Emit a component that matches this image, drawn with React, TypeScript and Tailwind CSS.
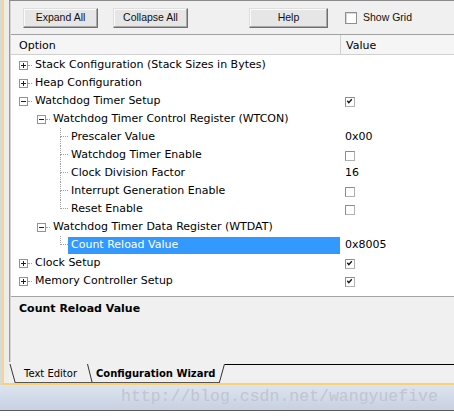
import React from 'react'

type Value = { kind: 'check'; checked: boolean } | { kind: 'text'; text: string }

type Row = {
  level: 0 | 1 | 2
  label: string
  expanded?: boolean
  last?: boolean
  selected?: boolean
  value?: Value
}

const ROWS: Row[] = [
  { level: 0, label: 'Stack Configuration (Stack Sizes in Bytes)' },
  { level: 0, label: 'Heap Configuration' },
  { level: 0, label: 'Watchdog Timer Setup', expanded: true, value: { kind: 'check', checked: true } },
  { level: 1, label: 'Watchdog Timer Control Register (WTCON)', expanded: true },
  { level: 2, label: 'Prescaler Value', value: { kind: 'text', text: '0x00' } },
  { level: 2, label: 'Watchdog Timer Enable', value: { kind: 'check', checked: false } },
  { level: 2, label: 'Clock Division Factor', value: { kind: 'text', text: '16' } },
  { level: 2, label: 'Interrupt Generation Enable', value: { kind: 'check', checked: false } },
  { level: 2, label: 'Reset Enable', last: true, value: { kind: 'check', checked: false } },
  { level: 1, label: 'Watchdog Timer Data Register (WTDAT)', expanded: true },
  { level: 2, label: 'Count Reload Value', last: true, selected: true, value: { kind: 'text', text: '0x8005' } },
  { level: 0, label: 'Clock Setup', value: { kind: 'check', checked: true } },
  { level: 0, label: 'Memory Controller Setup', value: { kind: 'check', checked: true } },
]

function ExpandBox({ expanded }: { expanded?: boolean }) {
  return (
    <svg width="9" height="9" viewBox="0 0 9 9" className="shrink-0">
      <rect x="0.5" y="0.5" width="8" height="8" fill="#fff" stroke="#939393" />
      <line x1="2" y1="4.5" x2="7" y2="4.5" stroke="#1b1b3a" />
      {!expanded && <line x1="4.5" y1="2" x2="4.5" y2="7" stroke="#1b1b3a" />}
    </svg>
  )
}

function SmallCheck({ checked }: { checked: boolean }) {
  return (
    <svg width="10" height="10" viewBox="0 0 10 10">
      <rect x="0.5" y="0.5" width="9" height="9" fill="#fff" stroke="#b0b0b0" />
      <path d="M0.5 9.5V0.5H9.5" fill="none" stroke="#8c8c8c" />
      {checked && <path d="M2.3 3.8L3.8 5.6L6.8 2.2" fill="none" stroke="#151515" strokeWidth="1.4" />}
    </svg>
  )
}

function TreeRow({ row }: { row: Row }) {
  return (
    <div className="flex h-[18px]">
      <div className="flex w-[330px] shrink-0 items-center">
        {row.level === 0 && (
          <div className="flex items-center pl-[8px]">
            <ExpandBox expanded={row.expanded} />
            <span className="w-[4px] border-t border-dotted border-[#a0a0a0]" />
          </div>
        )}
        {row.level === 1 && (
          <div className="flex items-center pl-[26px]">
            <ExpandBox expanded={row.expanded} />
            <span className="w-[4px] border-t border-dotted border-[#a0a0a0]" />
          </div>
        )}
        {row.level === 2 && (
          <div className="ml-[49px] flex h-full w-[8px] flex-col">
            <div className="h-[9px] border-b border-l border-dotted border-[#a0a0a0]" />
            {!row.last && <div className="flex-1 border-l border-dotted border-[#a0a0a0]" />}
          </div>
        )}
        <div
          className={
            row.selected
              ? 'mr-[1px] flex h-[17px] flex-1 items-center bg-[#3399ff] px-[3px] pt-[1px] text-white'
              : 'flex h-[17px] flex-1 items-center px-[3px] pt-[1px] text-black'
          }
        >
          <span className="whitespace-nowrap">{row.label}</span>
        </div>
      </div>
      <div className="flex flex-1 items-center pl-[4px] pt-[1px]">
        {row.value?.kind === 'text' && <span className="text-black">{row.value.text}</span>}
        {row.value?.kind === 'check' && <SmallCheck checked={row.value.checked} />}
      </div>
    </div>
  )
}

function Button({ label, width }: { label: string; width: string }) {
  return (
    <div
      className={`${width} flex h-[20px] items-center justify-center border border-t-[#dedede] border-l-[#dedede] border-r-[#6f6f6f] border-b-[#6f6f6f] bg-[#e6e6e6] text-[10.5px] text-[#111] shadow-[inset_-1px_-1px_0_#a8a8a8,inset_1px_1px_0_#fafafa]`}
    >
      {label}
    </div>
  )
}

export default function App() {
  return (
    <div className="flex h-[419px] w-[454px] flex-col overflow-hidden bg-white font-[family-name:'DejaVu_Sans',Verdana,sans-serif] text-[11px]">
      <div className="flex h-[383px]">
        <div className="w-[2px] bg-[#d2d9e8]" />
        <div className="w-[2px] bg-[#f4d77e]" />
        <div className="w-[5px] bg-[#ededed]" />

        <div className="flex flex-1 flex-col">
          {/* panel */}
          <div className="flex h-[362px] flex-col border-l border-t border-l-[#9a9a9a] border-t-[#8a8a8a]">
            <div className="flex flex-1 flex-col border-l border-[#d4d4d4]">
              {/* toolbar */}
              <div className="flex h-[33px] items-center bg-[#f0f0f0] pl-[12px] font-[family-name:'Liberation_Sans',Arial,sans-serif]">
                <Button label="Expand All" width="w-[75px]" />
                <div className="ml-[15px]">
                  <Button label="Collapse All" width="w-[75px]" />
                </div>
                <div className="ml-[61px]">
                  <Button label="Help" width="w-[79px]" />
                </div>
                <div className="ml-[17px] h-[12px] w-[12px] border border-[#8e8f8f] bg-white shadow-[inset_1px_1px_0_#d8d8d8]" />
                <span className="ml-[6px] text-[10.5px] text-[#111]">Show Grid</span>
              </div>

              {/* header */}
              <div className="flex h-[21px] border-y border-t-[#a0a0a0] border-b-[#d0d0d0] bg-[#f5f5f5] text-black">
                <div className="flex w-[330px] items-center border-r border-[#d0d0d0] pl-[8px] pt-[3px]">Option</div>
                <div className="flex flex-1 items-center pl-[5px] pt-[3px]">Value</div>
              </div>

              {/* tree */}
              <div className="h-[241px] bg-white pt-[1px]">
                {ROWS.map((row) => (
                  <TreeRow key={row.label} row={row} />
                ))}
              </div>

              {/* description */}
              <div className="flex-1 border-t border-[#a4a4a4] bg-[#f0f0f0] pl-[8px] pt-[4px]">
                <span className="font-bold leading-[16px] text-black">Count Reload Value</span>
              </div>
            </div>
          </div>

          {/* tabs */}
          <div className="flex h-[21px] bg-[#f0f0f0] text-[10px] text-black">
            <svg width="7" height="21" viewBox="0 0 7 21" className="shrink-0">
              <line x1="1" y1="2" x2="6" y2="20" stroke="#333" />
              <line x1="5.5" y1="20.5" x2="7" y2="20.5" stroke="#555" />
            </svg>
            <div className="mt-[2px] flex h-[19px] w-[71px] items-center border-b border-[#555] pl-[8px] pt-[1px]">Text Editor</div>
            <svg width="6" height="21" viewBox="0 0 6 21" className="shrink-0">
              <line x1="0.5" y1="2" x2="5" y2="20" stroke="#333" />
              <line x1="0" y1="20.5" x2="6" y2="20.5" stroke="#555" />
            </svg>
            <div className="mt-[2px] flex h-[19px] w-[126px] items-center border-b border-[#555] pl-[3px] pt-[1px] font-bold">
              Configuration Wizard
            </div>
            <svg width="6" height="21" viewBox="0 0 6 21" className="shrink-0">
              <line x1="0.5" y1="20" x2="5.5" y2="2" stroke="#333" />
              <line x1="0" y1="20.5" x2="1" y2="20.5" stroke="#555" />
            </svg>
            <div className="mt-[2px] flex-1 border-t border-black" />
          </div>
        </div>
      </div>

      <div className="flex h-[2px]">
        <div className="w-[2px] bg-[#d2d9e8]" />
        <div className="flex-1 bg-[#f6d473]" />
      </div>

      <div className="flex h-[25px] items-center bg-gradient-to-b from-[#dde3ef] to-[#c8d1e2] pl-[121px] font-[family-name:'Liberation_Mono',monospace] text-[16.5px] text-[#c0c5cf]">
        http://blog.csdn.net/wangyuefive
      </div>
      <div className="h-[1px] bg-[#5c5c5c]" />
      <div className="flex-1 bg-white" />
    </div>
  )
}
